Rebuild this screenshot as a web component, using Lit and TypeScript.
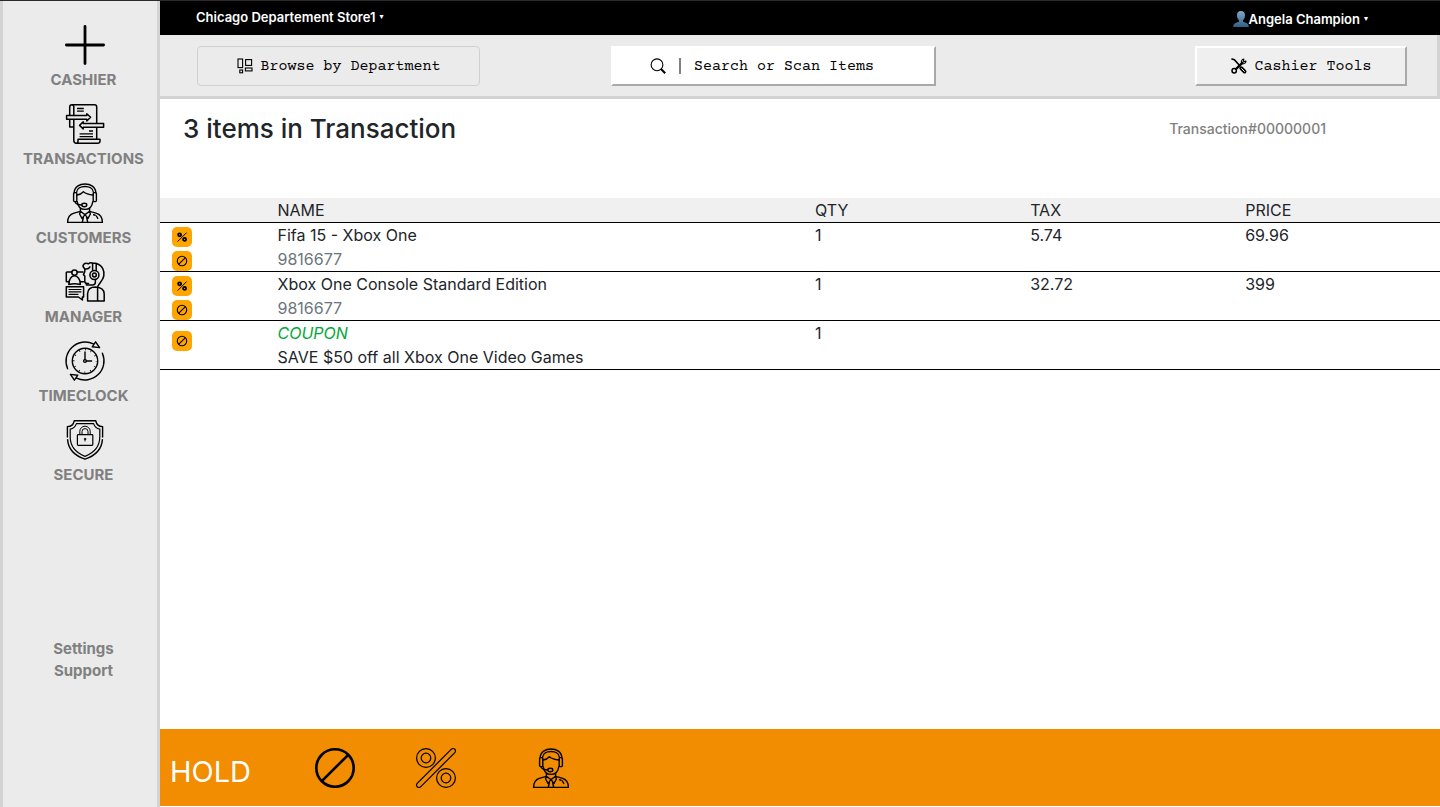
import { LitElement, html, css, svg, nothing } from "lit";
import { customElement, property, state } from "lit/decorators.js";

const ICONS: Record<string, { box: number; art: unknown }> = {
  plus: {
    box: 40,
    art: svg`<g stroke-width="2.8" stroke-linecap="round"><path d="M20 1.4V38.6M1.4 20H38.6"/></g>`,
  },
  transactions: {
    box: 40,
    art: svg`<g stroke-width="1.5" stroke-linejoin="round">
      <path d="M4.7 11.5V3.2Q4.7 .8 7 .8H29.6Q31.7 .8 31.7 3V19.5M31.7 23.2V35"/>
      <path d="M7 .8Q8.8 .8 8.8 3V11.5M8.8 15.2V36.6Q8.8 39.3 11.4 39.3H32.6Q35 39.3 35 37V35.2H13V37Q13 39.3 11.2 39.3"/>
      <path d="M4.7 15.2V23H8.8"/>
      <path d="M1.6 11.6H21.8V9.8L25.6 13.3L21.8 17V15.2H1.6Z"/>
      <path d="M38.6 19.5H18.2V17.8L14.6 21.4L18.2 25V23.3H38.6Z"/>
      <path d="M12 4.5H18.8M12 7.2H18.8M24 27H28M14.6 29.8H28M14.6 32.6H28" stroke-width="1.3"/></g>`,
  },
  customers: {
    box: 40,
    art: svg`<g stroke-width="1.4" stroke-linejoin="round" stroke-linecap="round">
      <path d="M9.2 9.8C9.2 -2 30.8 -2 30.8 9.8M11.6 9.2C12.2 1.6 27.8 1.6 28.4 9.2"/>
      <rect x="8.6" y="9.6" width="3.2" height="9" rx="1"/><rect x="28.2" y="9.6" width="3.2" height="9" rx="1"/>
      <path d="M12 12C15 11.6 17 10.4 18.4 8.8C21 11 24.6 11.8 28 12M12.2 18.6C12.8 23 15.6 26.4 20 26.4S27.2 23 27.8 18.6"/>
      <path d="M10.2 18.8C10.6 21.2 13.8 21.8 16.8 22"/><ellipse cx="19.3" cy="22" rx="2.5" ry="1.7"/>
      <path d="M15.4 25.4V28.4L9 30.2Q2.6 32 2.6 39.4H37.4Q37.4 32 31 30.2L24.6 28.4V25.4"/>
      <path d="M15.4 28.2L14.6 31L17 35.4L20 31.6L23 35.4L25.4 31L24.6 28.2M15.4 28.2L20 31.6L24.6 28.2M18.4 34L17.4 39M21.6 34L22.6 39"/>
      <path d="M28.6 31.8L30.2 32.2M31.4 33L32.8 35.4"/></g>`,
  },
  manager: {
    box: 40,
    art: svg`<g stroke-width="1.5" stroke-linejoin="round" stroke-linecap="round">
      <path d="M6.8 10H2Q1.3 10 1.3 10.8V19.2Q1.3 19.8 2 19.8H4.2M12.2 10H18"/>
      <circle cx="9.5" cy="10.6" r="2.7"/>
      <path d="M3.8 22.4C3.8 17.4 6.4 13.8 9.5 13.8S15.4 17.4 15.4 22.4Q9.5 21.2 3.8 22.4ZM15 19.8H18.4"/>
      <path d="M19.8 9.6V6.8Q17 4.6 18.6 2.4Q20.4 .4 23.4 1.8Q25.4 .2 27.6 1.2M19.8 9.6L18.4 12.6L19.8 14V19.8Q20 21.6 23.6 21.4M19.8 6.8Q23.4 7.6 25 4.8"/>
      <path d="M27.6 8.4V1.2H31.2V8.4M31.2 1.4C37.6 3 39.8 9.4 38.8 14C38 18.2 34.8 20.6 32.8 24.4"/>
      <circle cx="29.4" cy="13" r="4.5"/><circle cx="29.4" cy="13" r="1.9"/>
      <path d="M30.4 17.6V20Q30.4 23 27.4 23H21.4V21.6"/>
      <path d="M22.6 39V31.6Q23 25 30.4 25Q39.2 25.4 39.2 32V39ZM32.6 25.2V39"/>
      <path d="M1.3 24.7H18.6V35H17.4V38L13.4 35H1.3Z"/>
      <path d="M4 27.5H16M4 29.9H16M4 32.3H13" stroke-width="1.2"/></g>`,
  },
  timeclock: {
    box: 40,
    art: svg`<g stroke-width="1.4" stroke-linejoin="round" stroke-linecap="round">
      <circle cx="20" cy="20" r="12.7"/>
      <circle cx="20" cy="20" r="11.3" stroke-width="1.8" stroke-dasharray=".8 5.117" stroke-dashoffset=".4" stroke-linecap="butt"/>
      <path d="M20 18.6V11M21.4 20H26.6"/><circle cx="20" cy="20" r="1.4"/>
      <path d="M2.6 27.8A19.2 19.2 0 0 1 28.4 2.8M37.4 12.2A19.2 19.2 0 0 1 11.6 37.2"/>
      <path d="M30.6 .8L27.2 5.8L34.6 6.6ZM5.4 33.4L12.8 34.2L9.4 39.2Z"/></g>`,
  },
  secure: {
    box: 40,
    art: svg`<g stroke-width="1.4" stroke-linejoin="round" stroke-linecap="round">
      <path d="M2.4 17V6.6Q8.2 6.4 9.2 .8H30.8Q31.8 6.4 37.6 6.6V17M37.4 19.6C36.8 28.6 30.4 35.6 20 39.2C9.6 35.6 3.2 28.6 2.6 19.6"/>
      <path d="M5.2 9.2Q9.8 8.2 11.4 3.6H28.6Q30.2 8.2 34.8 9.2V17C34.8 26.8 29.4 32.6 20 36.4C10.6 32.6 5.2 26.8 5.2 17Z" stroke-width="1.2"/>
      <rect x="12.4" y="14.6" width="15.4" height="10.8" rx=".8" stroke-width="1.2"/>
      <path d="M14.8 14.4V11.4A5.2 5.2 0 0 1 25.2 11.4V14.4M17 14.4V11.6A3 3 0 0 1 23 11.6V14.4" stroke-width="1"/>
      <circle cx="20" cy="19" r=".8" fill="currentColor" stroke-width=".6"/><path d="M20 19V21" stroke-width="1"/></g>`,
  },
  ban: {
    box: 40,
    art: svg`<g stroke-width="2.6"><circle cx="20" cy="20" r="18.7"/><path d="M6.8 33.2L33.2 6.8"/></g>`,
  },
  percent: {
    box: 40,
    art: svg`<g stroke-width="1.2"><circle cx="10" cy="10" r="9.4"/><circle cx="10" cy="10" r="4.8"/>
      <circle cx="30" cy="30" r="9.4"/><circle cx="30" cy="30" r="4.8"/>
      <path d="M1.2 38.8Q-.2 37 1.2 35.4L35.4 1.2Q37 -.2 38.8 1.2Q40.2 3 38.8 4.6L4.6 38.8Q3 40.2 1.2 38.8Z"/></g>`,
  },
  smallBan: {
    box: 12,
    art: svg`<g stroke-width="1.1"><circle cx="6" cy="6" r="4.7"/><path d="M2.8 9.2L9.2 2.8"/></g>`,
  },
  smallPercent: {
    box: 12,
    art: svg`<g><circle cx="3.6" cy="3.8" r="1.5" stroke-width="1.8"/><circle cx="8.6" cy="8.4" r="1.5" stroke-width="1.8"/>
      <path d="M1.6 10.6L10.6 1.6" stroke-width="1"/></g>`,
  },
  grid: {
    box: 16,
    art: svg`<g stroke-width="1.1"><rect x="1" y="1" width="4.6" height="8.6"/><rect x="8.6" y="1.6" width="6" height="5.8"/>
      <rect x="8.4" y="10" width="6.6" height="2.9"/><rect x="2.8" y="12" width="2.8" height="2.8"/></g>`,
  },
  search: {
    box: 16,
    art: svg`<circle cx="7" cy="6.8" r="5.9" stroke-width="1.1"/><path d="M11 11L15.2 15.2" stroke-width="2.1"/>`,
  },
  tools: {
    box: 16,
    art: svg`<g stroke-linecap="round" stroke-linejoin="round"><path d="M1 1L3.4 1.8L8.8 7.8" stroke-width="1.7"/>
      <path d="M10.2 10.2L13.6 13.6" stroke-width="3.8"/><path d="M10.6 10.6L13.4 13.4" stroke="#efefef" stroke-width="1"/>
      <path d="M5 11L11.4 4.8" stroke-width="2.4"/>
      <path d="M12.8 1A3 3 0 0 0 10.4 4.6L11.6 5.8A3 3 0 0 0 15 3L13 3.6L12.4 3Z" stroke-width="1.1"/>
      <circle cx="3.2" cy="12.8" r="2.2" stroke-width="1.5"/></g>`,
  },
  person: {
    box: 16,
    art: svg`<defs><linearGradient id="skin" x1="0" y1="0" x2="0" y2="1"><stop offset="0" stop-color="#7fa9c9"/><stop offset="1" stop-color="#2f5f86"/></linearGradient></defs>
      <path stroke="none" fill="url(#skin)" d="M8 0C10.8 0 12.2 2 12 4.8C11.9 7 11 8.4 10 9.2V10.8C12.6 11.8 15.6 12 15.8 16H.2C.4 12 3.4 11.8 6 10.8V9.2C5 8.4 4.1 7 4 4.8C3.8 2 5.2 0 8 0Z"/>`,
  },
};

@customElement("pos-icon")
export class PosIcon extends LitElement {
  static styles = css`
    :host {
      display: inline-flex;
      flex: none;
      width: 40px;
      height: 40px;
    }
    .glyph {
      width: 100%;
      height: 100%;
      overflow: visible;
    }
  `;

  @property() name = "plus";

  render() {
    const icon = ICONS[this.name];
    return html`<svg class="glyph" viewBox="0 0 ${icon.box} ${icon.box}" fill="none" stroke="currentColor" aria-hidden="true">${icon.art}</svg>`;
  }
}

interface Line {
  name: string;
  detail: string;
  qty: string;
  tax: string;
  price: string;
  coupon?: boolean;
}

@customElement("app-root")
export class AppRoot extends LitElement {
  static styles = css`
    :host {
      display: block;
      font-family: Inter, "Liberation Sans", sans-serif;
      font-size: 16px;
      line-height: 24px;
      color: #212529;
    }
    * {
      box-sizing: border-box;
    }
    button {
      font: inherit;
      color: inherit;
      background: none;
      border: 0;
      padding: 0;
      cursor: pointer;
    }
    .page {
      display: grid;
      grid-template-columns: 160px 1fr;
      min-height: 100vh;
      border-top: 1px solid #2a2a2a;
    }
    .sidebar {
      display: flex;
      flex-direction: column;
      padding: 24px 0 0 7px;
      background: #ebebeb;
      border: solid #d3d3d3;
      border-width: 0 3px;
      color: #808080;
      font-size: 15px;
      font-weight: 700;
      text-align: center;
    }
    .nav {
      display: flex;
      flex-direction: column;
      gap: 12px;
    }
    .nav-item {
      display: flex;
      flex-direction: column;
      align-items: center;
      gap: 3px;
    }
    .nav-item pos-icon {
      margin-left: 3px;
      color: #000;
    }
    .links {
      display: flex;
      flex-direction: column;
      align-items: center;
      margin-top: 151px;
      line-height: 22px;
    }
    .links a {
      color: inherit;
      text-decoration: none;
    }
    .main {
      display: flex;
      flex-direction: column;
      min-width: 0;
      background: #fff;
      padding-bottom: 1px;
    }
    .topbar {
      display: flex;
      justify-content: space-between;
      height: 34px;
      padding: 0 72px 0 36px;
      background: #000;
      color: #fff;
      font-size: 13px;
      font-weight: 600;
    }
    .menu {
      display: flex;
      align-items: center;
      gap: 4px;
      line-height: 32px;
      align-self: flex-start;
    }
    .user {
      padding-top: 2px;
    }
    .who {
      display: flex;
      align-items: center;
    }
    .who pos-icon {
      width: 16px;
      height: 16px;
    }
    .caret {
      font-family: "DejaVu Sans", sans-serif;
      font-size: 8px;
    }
    .toolbar {
      display: grid;
      grid-template-columns: 414fr 584fr 212fr;
      align-items: center;
      padding: 11px 30px 10px 37px;
      background: #ebebeb;
      border: solid #d3d3d3;
      border-width: 0 3px 3px 0;
      font-family: "Courier Prime", "Liberation Mono", monospace;
      font-size: 15px;
      color: #000;
    }
    .toolbar pos-icon {
      width: 16px;
      height: 16px;
    }
    .browse,
    .tools,
    .search {
      display: flex;
      align-items: center;
      height: 40px;
      justify-self: start;
    }
    .browse {
      justify-content: center;
      gap: 8px;
      width: 283px;
      border: 1px solid #d0d0d0;
      border-radius: 4px;
    }
    .search {
      width: 325px;
      padding: 0 37px;
      background: #fff;
      border: 2px solid;
      border-color: #fff #a9a9a9 #a9a9a9 #fff;
    }
    .divider {
      width: 2px;
      height: 16px;
      margin: 0 13px;
      background: #808080;
    }
    .field {
      flex: 1;
      min-width: 0;
      padding: 2px 0 0;
      border: 0;
      outline: 0;
      background: none;
      font: inherit;
      color: #000;
    }
    .field::placeholder {
      color: #000;
      opacity: 1;
    }
    .label {
      padding-top: 2px;
    }
    .tools {
      justify-content: center;
      gap: 8px;
      justify-self: end;
      width: 212px;
      background: #efefef;
      border: 2px solid;
      border-color: #fff #a9a9a9 #a9a9a9 #fff;
    }
    .heading {
      display: flex;
      justify-content: space-between;
      height: 99px;
      padding: 13px 114px 0 23px;
    }
    .title {
      margin: 0;
      font-size: 26px;
      font-weight: 500;
      line-height: 34px;
    }
    .number {
      font-size: 14px;
      font-weight: 500;
      line-height: 34px;
      color: #808080;
    }
    .items {
      width: 100%;
      table-layout: fixed;
      border-collapse: separate;
      border-spacing: 0;
    }
    .col-actions {
      width: 8.4%;
    }
    .col-name {
      width: 42%;
    }
    .col-value {
      width: 16.8%;
    }
    .items th,
    .items td {
      padding: 0 0 0 10px;
      border-bottom: 1px solid #000;
      text-align: left;
      vertical-align: top;
      font-weight: 400;
    }
    .items th {
      background: #f0f0f0;
    }
    .items .actions {
      padding: 4px 0 0 12px;
    }
    .items .actions.single {
      padding-top: 10px;
    }
    .stack {
      display: flex;
      flex-direction: column;
      gap: 4px;
      width: 20px;
    }
    .action {
      display: flex;
      align-items: center;
      justify-content: center;
      width: 20px;
      height: 20px;
      border-radius: 5px;
      background: #ffa500;
      color: #000;
    }
    .action pos-icon {
      width: 12px;
      height: 12px;
    }
    .muted {
      color: #6c757d;
    }
    .coupon {
      color: #00a838;
      font-style: italic;
    }
    .footer {
      display: grid;
      grid-template-columns: 145px 101px 115px 40px;
      align-items: center;
      height: 77px;
      margin-top: auto;
      padding-left: 10px;
      background: #f28c00;
      color: #000;
    }
    .footer button {
      display: flex;
    }
    .footer .hold {
      padding-top: 8px;
      font-size: 29px;
      line-height: 36px;
      color: #fff;
    }
  `;

  @state() private query = "";

  private nav = [
    ["plus", "CASHIER"],
    ["transactions", "TRANSACTIONS"],
    ["customers", "CUSTOMERS"],
    ["manager", "MANAGER"],
    ["timeclock", "TIMECLOCK"],
    ["secure", "SECURE"],
  ];

  private lines: Line[] = [
    { name: "Fifa 15 - Xbox One", detail: "9816677", qty: "1", tax: "5.74", price: "69.96" },
    { name: "Xbox One Console Standard Edition", detail: "9816677", qty: "1", tax: "32.72", price: "399" },
    { name: "COUPON", detail: "SAVE $50 off all Xbox One Video Games", qty: "1", tax: "", price: "", coupon: true },
  ];

  private renderLine(line: Line) {
    return html`<tr>
      <td class="actions ${line.coupon ? "single" : ""}">
        <div class="stack">
          ${line.coupon
            ? nothing
            : html`<button class="action" aria-label="Discount item"><pos-icon name="smallPercent"></pos-icon></button>`}
          <button class="action" aria-label="Void item"><pos-icon name="smallBan"></pos-icon></button>
        </div>
      </td>
      <td>
        <div class=${line.coupon ? "coupon" : ""}>${line.name}</div>
        <div class=${line.coupon ? "" : "muted"}>${line.detail}</div>
      </td>
      <td>${line.qty}</td>
      <td>${line.tax}</td>
      <td>${line.price}</td>
    </tr>`;
  }

  render() {
    return html`<div class="page">
      <aside class="sidebar">
        <nav class="nav">
          ${this.nav.map(
            ([icon, label]) => html`<button class="nav-item"><pos-icon name=${icon}></pos-icon><span>${label}</span></button>`
          )}
        </nav>
        <div class="links"><a href="#settings">Settings</a><a href="#support">Support</a></div>
      </aside>
      <main class="main">
        <header class="topbar">
          <button class="menu" aria-haspopup="menu">Chicago Departement Store1<span class="caret">▾</span></button>
          <button class="menu user" aria-haspopup="menu">
            <span class="who"><pos-icon name="person"></pos-icon>Angela Champion</span><span class="caret">▾</span>
          </button>
        </header>
        <div class="toolbar">
          <button class="browse"><pos-icon name="grid"></pos-icon><span class="label">Browse by Department</span></button>
          <label class="search">
            <pos-icon name="search"></pos-icon><span class="divider"></span>
            <input
              class="field"
              type="text"
              aria-label="Search or Scan Items"
              placeholder="Search or Scan Items"
              .value=${this.query}
              @input=${(e: Event) => (this.query = (e.target as HTMLInputElement).value)}
            />
          </label>
          <button class="tools"><pos-icon name="tools"></pos-icon><span class="label">Cashier Tools</span></button>
        </div>
        <div class="heading">
          <h1 class="title">3 items in Transaction</h1>
          <span class="number">Transaction#00000001</span>
        </div>
        <table class="items">
          <colgroup>
            <col class="col-actions" /><col class="col-name" /><col class="col-value" /><col class="col-value" /><col />
          </colgroup>
          <thead>
            <tr><th></th><th>NAME</th><th>QTY</th><th>TAX</th><th>PRICE</th></tr>
          </thead>
          <tbody>
            ${this.lines.map((line) => this.renderLine(line))}
          </tbody>
        </table>
        <footer class="footer">
          <button class="hold">HOLD</button>
          <button aria-label="Void transaction"><pos-icon name="ban"></pos-icon></button>
          <button aria-label="Apply discount"><pos-icon name="percent"></pos-icon></button>
          <button aria-label="Find customer"><pos-icon name="customers"></pos-icon></button>
        </footer>
      </main>
    </div>`;
  }
}
